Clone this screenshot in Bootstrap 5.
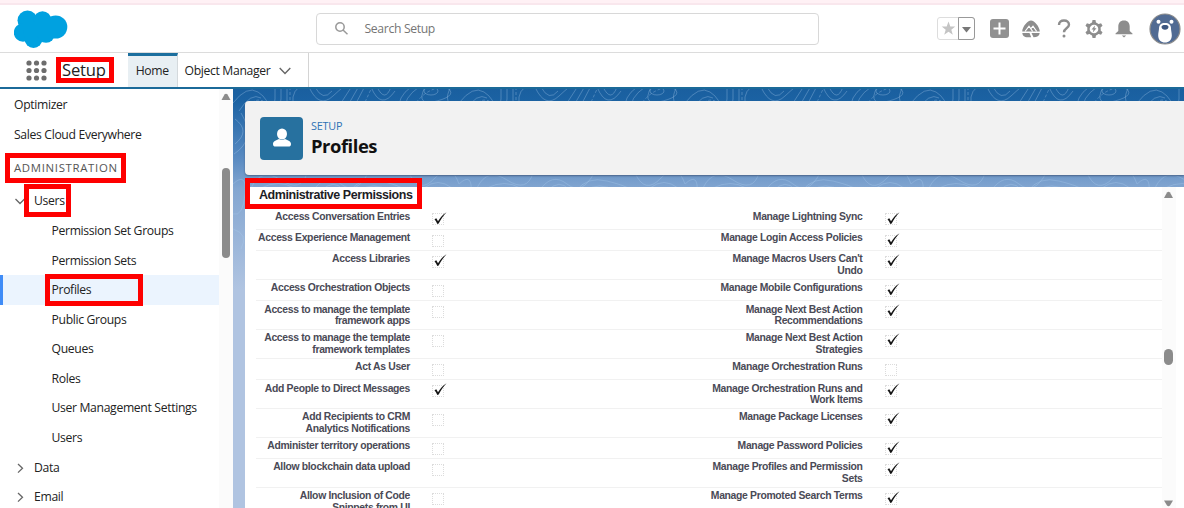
<!DOCTYPE html>
<html lang="en">
<head>
<meta charset="utf-8">
<meta name="viewport" content="width=device-width, initial-scale=1">
<title>Profiles | Setup</title>
<link href="https://cdn.jsdelivr.net/npm/bootstrap@5.3.0/dist/css/bootstrap.min.css" rel="stylesheet">
<style>
body{width:1184px;height:508px;overflow:hidden;font-family:"Open Sans","Noto Sans",sans-serif;font-size:12.2px;letter-spacing:-.34px;color:#222;background:#fff}
svg{display:block;flex:none}
.env-strip{height:5px;background:#fff1f5;border-bottom:2px solid #f9e7ed}
.top-head{height:48px;border-bottom:1px solid #dcdcdc}
.brand-logo{margin-left:14px;width:301.5px}
.search-box{width:503px;height:32px;border:1px solid #d8d8d8;border-radius:4px;color:#757575;font-size:12.2px;padding-left:18px}
.search-hint{margin-left:17px;padding-top:1px}
.head-tools{margin-left:118px}
.fav{width:38px;height:23px;border:1px solid #ddd;border-radius:3px}
.fav-menu{width:17px;height:23px;border:1px solid #999;border-radius:0 3px 3px 0;margin:-1px -1px 0 0}
.app-nav{height:36px;border-bottom:2px solid #1b6a99}
.app-title{font-size:16.6px;width:66px;margin-left:15px;letter-spacing:-.2px}
.tab-home{width:49.5px;border-top:3px solid #1c6f9e;background:#e8eff3;border-right:1px solid #d4d9dc}
.tab-obj{width:131px;padding-left:7px;padding-top:2px;border-right:1px solid #d4d4d4}
.work{height:419px}
.side{width:219px;padding-top:1px}
.side-row{height:29.6px;padding-left:14px;padding-top:1px;white-space:nowrap}
.side-sub{padding-left:51.5px}
.side-group{padding-left:14px}
.side-group svg{margin-right:8px}
.side-cap{height:37px;padding-top:0;letter-spacing:.67px;font-size:11.4px;color:#555}
.side-on{background:#ebf4fe;border-left:3px solid #3f8cf7;padding-left:48.5px}
.scroll-col{width:14px;background:#fbfbfb}
.stage{min-width:0;background:linear-gradient(#1a5f9f 0,#1b62a3 12px,#5a8bc2 70px,#83a6d1 100px,#b0c4e1 200px)}
.topo{left:0;top:0}
.page-card{margin:12px 0 0 12px;height:74px;background:#f2f2f2;border-radius:4px 0 0 4px;box-shadow:0 1px 2px #48648a;padding-left:15px}
.obj-icon{width:43px;height:43px;background:#27719f;border-radius:4px;margin-right:8px}
.kicker{font-size:10.8px;color:#2e73b5;line-height:14px;letter-spacing:-.2px;padding-top:1px}
.page-title{font-size:18.4px;font-weight:700;line-height:25px;color:#111;letter-spacing:-.45px}
.sheet{margin:11.5px 0 0 12px;height:321.5px;background:#fff;font-family:"Liberation Sans",Arial,sans-serif}
.sheet-main{width:917px;padding-left:11px}
.sec-title{height:21.9px;padding-left:3px;padding-top:.6px;font-size:12.5px;letter-spacing:-.43px;font-weight:700;line-height:17px;color:#1d1d25}
.perm{border-bottom:1.5px solid #f1f1f1;font-size:10.4px;letter-spacing:-.33px;font-weight:700;line-height:11.2px;color:#4a4a56;height:28.9px;padding-top:2.7px}
.perm-s{height:21.2px}
.lab{width:154px;text-align:right;white-space:nowrap;flex:none}
.lab2{width:160px;margin-left:258.5px}
.box{width:12px;height:12px;border:1px dotted #dcdcdc;margin:2.4px 0 0 22px;overflow:visible;flex:none}
.lab2+.box{margin-left:22px}
.box svg{margin:-2.5px 0 0 1px;overflow:visible}
.callout{position:absolute;border:5px solid #fe0000;z-index:5}
.c-setup{left:56px;top:57px;width:58px;height:26px}
.c-admin{left:5px;top:153px;width:121px;height:30px}
.c-users{left:24px;top:184px;width:47px;height:33px}
.c-prof{left:45px;top:274px;width:98px;height:32px}
.c-perm{left:245px;top:178px;width:177px;height:31px}
</style>
</head>
<body class="position-relative">
<svg width="0" height="0" class="position-absolute"><defs>
<symbol id="tick" viewBox="0 0 13 13"><path d="M.5 7.200 2.300 6.300 4 9.200C6.500 5.300 9 2.300 12.600 .3 9.500 3.300 6.800 7.300 4.700 11.600L3.300 11.900C2.600 10.200 1.700 8.700 .5 7.200Z" fill="#151515"/></symbol>
</defs></svg>
<div class="env-strip"></div>
<header class="top-head d-flex align-items-center">
  <div class="brand-logo"><svg width="54" height="38" viewBox="0 0 54 38" fill="#00a1e0"><circle cx="13.500" cy="10.500" r="10"/><circle cx="28.500" cy="10" r="8.800"/><circle cx="41.700" cy="17" r="11.600"/><circle cx="9" cy="22.500" r="9.200"/><circle cx="19.500" cy="29" r="9"/><circle cx="32" cy="24" r="8.800"/><path d="M9 12h32v12H10z"/></svg></div>
  <div class="search-box d-flex align-items-center"><svg width="13" height="13" viewBox="0 0 13 13" fill="none" stroke="#999" stroke-width="1.500"><circle cx="5" cy="5" r="4.200"/><path d="m8 8 4.500 4.300"/></svg><span class="search-hint">Search Setup</span></div>
  <div class="head-tools d-flex align-items-center">
    <div class="fav d-flex justify-content-between"><svg width="20" height="21" viewBox="0 0 20 21"><path d="m10.500 3.500 1.800 5h5l-4 3.200 1.500 5.100-4.300-3-4.300 3 1.500-5.100-4-3.200h5z" fill="#c4c4c4"/></svg><div class="fav-menu"><svg width="15" height="21"><path d="M3 9h9l-4.500 5.500z" fill="#777"/></svg></div></div>
    <svg width="19" height="19" viewBox="0 0 19 19" style="margin-left:15px"><rect width="19" height="19" rx="3" fill="#919191"/><path d="M9.500 3.500v12M3.500 9.500h12" stroke="#fff" stroke-width="2"/></svg>
    <svg width="18" height="18" viewBox="0 0 18 18" style="margin-left:13px"><path d="M9 .5C12.500 .5 17.500 6.500 17.800 11.500H.2C.5 6.500 5.500 .5 9 .5ZM.3 13h7.200l1.700 4.300C4 17.600.8 17 .3 13ZM9.500 13h8.200c-.4 3-2.500 4.300-6.200 4.300Z" fill="#8d8d8d"/><path d="m3 11.500 4-5.300 3.700 5.300M8.700 8.800l2.300-2.600 3.700 5.300" fill="none" stroke="#fff" stroke-width="1.200"/></svg>
    <svg width="14" height="19" viewBox="0 0 14 19" style="margin-left:17px"><path d="M2 6C2 3 4 1.500 7 1.500S12 3 12 5.800C12 9 7 9 7 13.300" fill="none" stroke="#8d8d8d" stroke-width="2.400"/><circle cx="7" cy="17" r="1.500" fill="#8d8d8d"/></svg>
    <svg width="18" height="18" viewBox="0 0 18 18" style="margin-left:14px"><g fill="#8d8d8d"><circle cx="9" cy="9" r="6.800"/><path id="cog" d="M7.500 0h3l.7 4H6.800zM7.500 18h3l.7-4H6.800z"/><use href="#cog" transform="rotate(60 9 9)"/><use href="#cog" transform="rotate(120 9 9)"/></g><circle cx="9" cy="9" r="4.300" fill="#fff"/><path d="M10 5.500 6.500 9.600h2L7.800 12.600l3.700-4.300h-2z" fill="#8d8d8d"/></svg>
    <svg width="18" height="18" viewBox="0 0 18 18" style="margin-left:12px" fill="#8d8d8d"><path d="M9 .5c4 0 5.700 2.700 5.700 6V11l2.800 2.500v.8H.5v-.8L3.300 11V6.500c0-3.300 1.700-6 5.700-6ZM6.800 15.500h4.400L9 17.500z"/></svg>
    <svg width="32" height="32" viewBox="0 0 32 32" style="margin-left:16px"><circle cx="16" cy="16" r="15" fill="#516b93" stroke="#8b8b8b" stroke-width="1.200"/><circle cx="9.500" cy="8.800" r="2" fill="#fff"/><circle cx="22.500" cy="8.800" r="2" fill="#fff"/><path d="M16 10c4 0 6 2 6 5.500 0 2 .8 4 .8 7 0 4.500-3 7-6.800 7s-6.800-2.500-6.800-7c0-3 .8-5 .8-7 0-3.500 2-5.500 6-5.500Z" fill="#fff"/><path d="M12.500 14c0-1.500 1.500-2 3.500-2s3.500.5 3.500 2c0 1.300-1.500 2.800-3.500 2.800s-3.500-1.500-3.500-2.800Z" fill="#3c5680"/></svg>
  </div>
</header>
<nav class="app-nav d-flex">
  <div class="d-flex align-items-center" style="padding-left:26px"><svg width="21" height="21" viewBox="0 0 21 21" fill="#6d6d6d"><circle cx="3" cy="3" r="2.600"/><circle cx="10.500" cy="3" r="2.600"/><circle cx="18" cy="3" r="2.600"/><circle cx="3" cy="10.500" r="2.600"/><circle cx="10.500" cy="10.500" r="2.600"/><circle cx="18" cy="10.500" r="2.600"/><circle cx="3" cy="18" r="2.600"/><circle cx="10.500" cy="18" r="2.600"/><circle cx="18" cy="18" r="2.600"/></svg><span class="app-title">Setup</span></div>
  <div class="tab-home d-flex align-items-center justify-content-center">Home</div>
  <div class="tab-obj d-flex align-items-center">Object Manager<svg width="12" height="8" viewBox="0 0 12 8" fill="none" stroke="#666" stroke-width="1.400" style="margin-left:9px"><path d="m.7 1 5.300 5.500L11.300 1"/></svg></div>
</nav>
<div class="work d-flex">
  <aside class="side overflow-hidden flex-shrink-0">
    <div class="side-row d-flex align-items-center">Optimizer</div>
    <div class="side-row d-flex align-items-center">Sales Cloud Everywhere</div>
    <div class="side-row side-cap d-flex align-items-center">ADMINISTRATION</div>
    <div class="side-row side-group d-flex align-items-center"><svg width="12" height="12" viewBox="0 0 12 12" fill="none" stroke="#666" stroke-width="1.300"><path d="m1.500 4 4.500 4.500L10.500 4"/></svg>Users</div>
    <div class="side-row side-sub d-flex align-items-center">Permission Set Groups</div>
    <div class="side-row side-sub d-flex align-items-center">Permission Sets</div>
    <div class="side-row side-on d-flex align-items-center">Profiles</div>
    <div class="side-row side-sub d-flex align-items-center">Public Groups</div>
    <div class="side-row side-sub d-flex align-items-center">Queues</div>
    <div class="side-row side-sub d-flex align-items-center">Roles</div>
    <div class="side-row side-sub d-flex align-items-center">User Management Settings</div>
    <div class="side-row side-sub d-flex align-items-center">Users</div>
    <div class="side-row side-group d-flex align-items-center"><svg width="12" height="12" viewBox="0 0 12 12" fill="none" stroke="#666" stroke-width="1.300"><path d="m4 2 4.500 4.300L4 10.600"/></svg>Data</div>
    <div class="side-row side-group d-flex align-items-center"><svg width="12" height="12" viewBox="0 0 12 12" fill="none" stroke="#666" stroke-width="1.300"><path d="m4 2 4.500 4.300L4 10.600"/></svg>Email</div>
  </aside>
  <div class="scroll-col flex-shrink-0"><svg width="14" height="419" fill="#8b8b8b"><path d="M2.500 11 5.500 5.500q1.500-1.500 3 0L11.500 11z"/><rect x="3" y="79" width="8" height="90" rx="4"/></svg></div>
  <main class="stage flex-grow-1 position-relative">
    <svg class="topo position-absolute" width="951" height="190"><defs>
      <pattern id="contour" width="226" height="190" patternUnits="userSpaceOnUse"><g fill="none" stroke="#a9cbed" stroke-opacity=".33" stroke-width="1">
        <path d="M0 14Q14-4 25 3T36 22M6 22Q18 3 28 9M42-2Q43 10 40 22M48-2Q49 10 46 22M54-2V22M62 22Q56 6 66-2M76-2Q86 20 100 7T112-2M82-2Q90 13 99 2M108 14 119-3M114 18 126-3M120 20 132-3M138-2Q148 22 162 2M144-2Q152 14 158-2M166 22Q164 8 178-2M172 22Q170 9 186-2M192-2Q182 18 204 12T213-2M218-2Q208 14 226 22"/>
        <path stroke-dasharray="3 2" d="M13 22Q20 8 30 12M57-2V22M178 22Q188 2 208-2M128 22 139-2"/>
        <ellipse cx="198" cy="2" rx="7" ry="4"/>
        <path d="M2 30Q18 42 2 55M8 24Q24 50 1 65M0 95Q14 82 12 105T0 125M0 140Q16 145 8 160M18 99Q28 78 48 91T74 84M28 99Q46 90 61 99M34 103Q46 95 55 103M80 102Q93 83 108 95T135 84M88 102Q101 89 110 101M117 102Q128 87 148 92T170 100M126 102Q140 92 157 102M176 84Q186 106 202 89T226 95M191 99Q205 88 219 99"/>
      </g></pattern></defs><rect width="951" height="190" fill="url(#contour)"/></svg>
    <div class="page-card d-flex align-items-center position-relative">
      <div class="obj-icon d-flex align-items-center justify-content-center"><svg width="20" height="20" viewBox="0 0 20 20" fill="#fff"><ellipse cx="10" cy="6" rx="5" ry="5.600"/><path d="M1 16c0-3 3-3.500 6-5 2 1.300 4 1.300 6 0 3 1.500 6 2 6 5 0 2-1 2.500-2.500 2.500h-13C2 18.500 1 18 1 16Z"/></svg></div>
      <div><div class="kicker">SETUP</div><div class="page-title">Profiles</div></div>
    </div>
    <div class="sheet d-flex position-relative overflow-hidden">
      <div class="sheet-main">
        <div class="sec-title">Administrative Permissions</div>
        <div class="perm perm-s d-flex"><div class="lab">Access Conversation Entries</div><div class="box"><svg width="13" height="13"><use href="#tick"/></svg></div><div class="lab lab2">Manage Lightning Sync</div><div class="box"><svg width="13" height="13"><use href="#tick"/></svg></div></div>
        <div class="perm perm-s d-flex"><div class="lab">Access Experience Management</div><div class="box"></div><div class="lab lab2">Manage Login Access Policies</div><div class="box"><svg width="13" height="13"><use href="#tick"/></svg></div></div>
        <div class="perm d-flex"><div class="lab">Access Libraries</div><div class="box"><svg width="13" height="13"><use href="#tick"/></svg></div><div class="lab lab2">Manage Macros Users Can't<br>Undo</div><div class="box"><svg width="13" height="13"><use href="#tick"/></svg></div></div>
        <div class="perm perm-s d-flex"><div class="lab">Access Orchestration Objects</div><div class="box"></div><div class="lab lab2">Manage Mobile Configurations</div><div class="box"><svg width="13" height="13"><use href="#tick"/></svg></div></div>
        <div class="perm d-flex"><div class="lab">Access to manage the template<br>framework apps</div><div class="box"></div><div class="lab lab2">Manage Next Best Action<br>Recommendations</div><div class="box"><svg width="13" height="13"><use href="#tick"/></svg></div></div>
        <div class="perm d-flex"><div class="lab">Access to manage the template<br>framework templates</div><div class="box"></div><div class="lab lab2">Manage Next Best Action<br>Strategies</div><div class="box"><svg width="13" height="13"><use href="#tick"/></svg></div></div>
        <div class="perm perm-s d-flex"><div class="lab">Act As User</div><div class="box"></div><div class="lab lab2">Manage Orchestration Runs</div><div class="box"></div></div>
        <div class="perm d-flex"><div class="lab">Add People to Direct Messages</div><div class="box"><svg width="13" height="13"><use href="#tick"/></svg></div><div class="lab lab2">Manage Orchestration Runs and<br>Work Items</div><div class="box"><svg width="13" height="13"><use href="#tick"/></svg></div></div>
        <div class="perm d-flex"><div class="lab">Add Recipients to CRM<br>Analytics Notifications</div><div class="box"></div><div class="lab lab2">Manage Package Licenses</div><div class="box"><svg width="13" height="13"><use href="#tick"/></svg></div></div>
        <div class="perm perm-s d-flex"><div class="lab">Administer territory operations</div><div class="box"></div><div class="lab lab2">Manage Password Policies</div><div class="box"><svg width="13" height="13"><use href="#tick"/></svg></div></div>
        <div class="perm d-flex"><div class="lab">Allow blockchain data upload</div><div class="box"></div><div class="lab lab2">Manage Profiles and Permission<br>Sets</div><div class="box"><svg width="13" height="13"><use href="#tick"/></svg></div></div>
        <div class="perm d-flex"><div class="lab">Allow Inclusion of Code<br>Snippets from UI</div><div class="box"></div><div class="lab lab2">Manage Promoted Search Terms</div><div class="box"><svg width="13" height="13"><use href="#tick"/></svg></div></div>
      </div>
      <div class="scroll-col"><svg width="14" height="321" fill="#8b8b8b"><path d="M2 11 5 5.500q1.500-1.500 3 0L11 11z"/><rect x="2" y="162" width="9" height="16" rx="4.500"/><path d="M2 313.500h9l-3 5q-1.500 1.500-3 0z"/></svg></div>
    </div>
  </main>
</div>
<div class="callout c-setup"></div>
<div class="callout c-admin"></div>
<div class="callout c-users"></div>
<div class="callout c-prof"></div>
<div class="callout c-perm"></div>
<script src="https://cdn.jsdelivr.net/npm/bootstrap@5.3.0/dist/js/bootstrap.bundle.min.js"></script>
</body>
</html>
